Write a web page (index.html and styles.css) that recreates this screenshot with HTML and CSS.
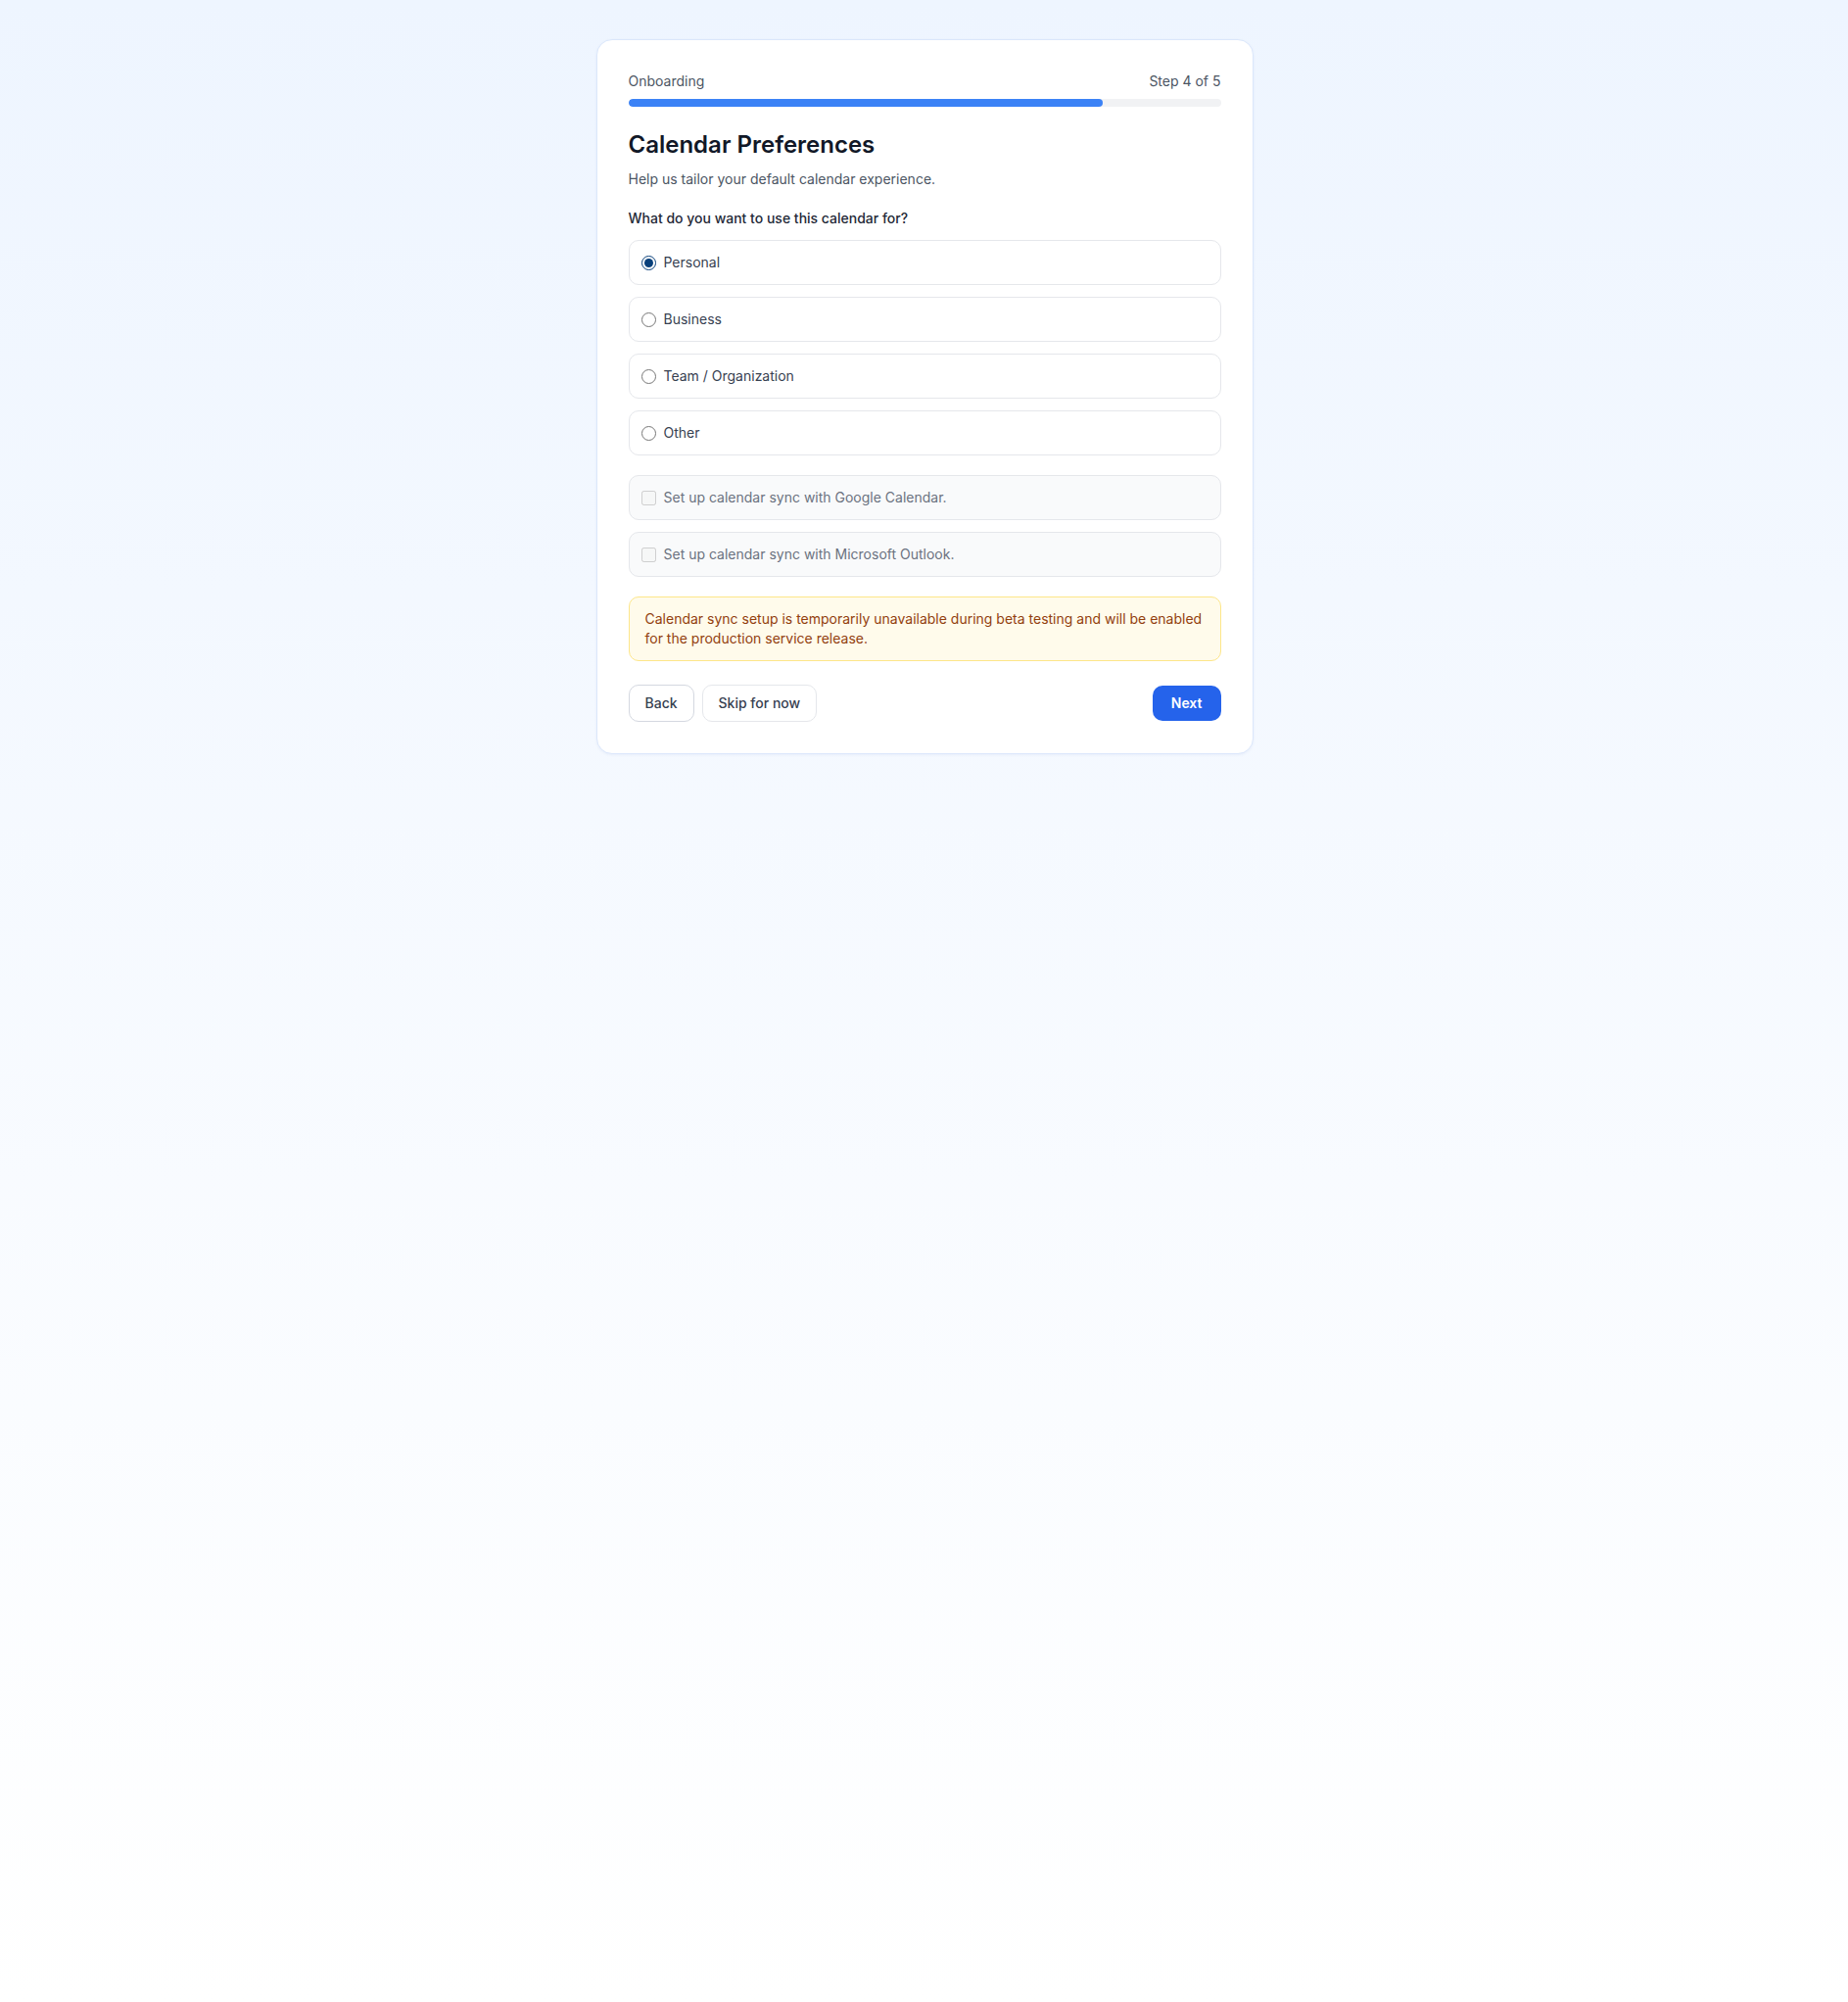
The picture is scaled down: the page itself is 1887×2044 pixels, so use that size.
FILE: index.html
```html
<!DOCTYPE html>
<html lang="en">
  <head>
    <meta charset="UTF-8" />
    <meta name="viewport" content="width=device-width, initial-scale=1.0" />
    <title>Onboarding | Calendar Preferences</title>
    <link rel="stylesheet" href="styles.css">
  </head>
  <body>
    <main class="card">
      <div class="progress-head">
        <span>Onboarding</span>
        <span>Step 4 of 5</span>
      </div>
      <div class="progress">
        <div class="progress-fill" style="width: 80%"></div>
      </div>

      <h1 class="title">Calendar Preferences</h1>
      <p class="subtitle">Help us tailor your default calendar experience.</p>

      <form class="prefs">
        <p class="question">What do you want to use this calendar for?</p>
        <div class="options">
          <label class="option">
            <input type="radio" name="usage" value="personal" checked />
            <span>Personal</span>
          </label>
          <label class="option">
            <input type="radio" name="usage" value="business" />
            <span>Business</span>
          </label>
          <label class="option">
            <input type="radio" name="usage" value="team" />
            <span>Team / Organization</span>
          </label>
          <label class="option">
            <input type="radio" name="usage" value="other" />
            <span>Other</span>
          </label>
        </div>

        <div class="options sync">
          <label class="option disabled">
            <input type="checkbox" name="google" disabled />
            <span>Set up calendar sync with Google Calendar.</span>
          </label>
          <label class="option disabled">
            <input type="checkbox" name="outlook" disabled />
            <span>Set up calendar sync with Microsoft Outlook.</span>
          </label>
        </div>

        <div class="notice">
          Calendar sync setup is temporarily unavailable during beta testing and will be enabled for the production service release.
        </div>

        <div class="actions">
          <div class="actions-left">
            <button type="button" class="btn btn-back">Back</button>
            <button type="button" class="btn">Skip for now</button>
          </div>
          <button type="submit" class="btn btn-primary">Next</button>
        </div>
      </form>
    </main>
  </body>
</html>
```

FILE: styles.css
```css
* {
    margin: 0;
    padding: 0;
    box-sizing: border-box;
}
html {
    min-height: 100%;
}
body {
    min-height: 100vh;
    background: linear-gradient(to bottom, #eef5ff 0%, #ffffff 100%);
    font-family: Inter, "Liberation Sans", sans-serif;
    color: #1f2937;
    padding: 40px 0 40px 1px;
    display: flex;
    flex-direction: column;
    align-items: center;
}
.card {
    width: 100%;
    max-width: 671px;
    background: #fff;
    border: 1px solid #dbe7fb;
    border-radius: 16px;
    box-shadow: 0 1px 3px rgba(30, 64, 175, 0.06);
    padding: 32px;
}
.progress-head {
    display: flex;
    justify-content: space-between;
    font-size: 14px;
    line-height: 20px;
    color: #4b5563;
}
.progress {
    margin-top: 8px;
    height: 8px;
    border-radius: 999px;
    background: #f1f2f4;
    overflow: hidden;
}
.progress-fill {
    height: 100%;
    background: #3b82f6;
    border-radius: 999px;
}
.title {
    margin-top: 24px;
    font-size: 24px;
    line-height: 30px;
    font-weight: 600;
    color: #111827;
}
.subtitle {
    margin-top: 10px;
    font-size: 14px;
    line-height: 20px;
    color: #4b5563;
}
.prefs {
    margin-top: 20px;
}
.question {
    font-size: 14px;
    line-height: 20px;
    font-weight: 500;
    color: #1f2937;
    margin-bottom: 12px;
}
.options {
    display: flex;
    flex-direction: column;
    gap: 12px;
}
.options.sync {
    margin-top: 20px;
}
.option {
    display: flex;
    align-items: center;
    gap: 8px;
    padding: 12px 12px;
    border: 1px solid #e5e7eb;
    border-radius: 10px;
    font-size: 14px;
    line-height: 20px;
    color: #374151;
    cursor: pointer;
}
.option input {
    width: 15px;
    height: 15px;
    margin: 0;
    accent-color: #083f7a;
    flex-shrink: 0;
}
.option.disabled {
    background: #f9fafb;
    color: #6b7280;
    cursor: not-allowed;
}
.notice {
    margin-top: 20px;
    padding: 12px 16px;
    background: #fffbeb;
    border: 1px solid #fde68a;
    border-radius: 10px;
    font-size: 14px;
    line-height: 20px;
    color: #92400e;
}
.actions {
    margin-top: 24px;
    display: flex;
    justify-content: space-between;
    align-items: center;
}
.actions-left {
    display: flex;
    gap: 8px;
}
.btn {
    font-family: inherit;
    font-size: 14px;
    line-height: 20px;
    font-weight: 500;
    padding: 8px 16px;
    border: 1px solid #e5e7eb;
    border-radius: 10px;
    background: #fff;
    color: #374151;
    cursor: pointer;
}
.btn-back {
    border-color: #d4d8e0;
}
.btn-primary {
    border: none;
    padding: 8px 19px;
    font-weight: 600;
    color: #fff;
    background: #2563eb;
}
.btn-primary:hover {
    background: #1d4ed8;
}
```
